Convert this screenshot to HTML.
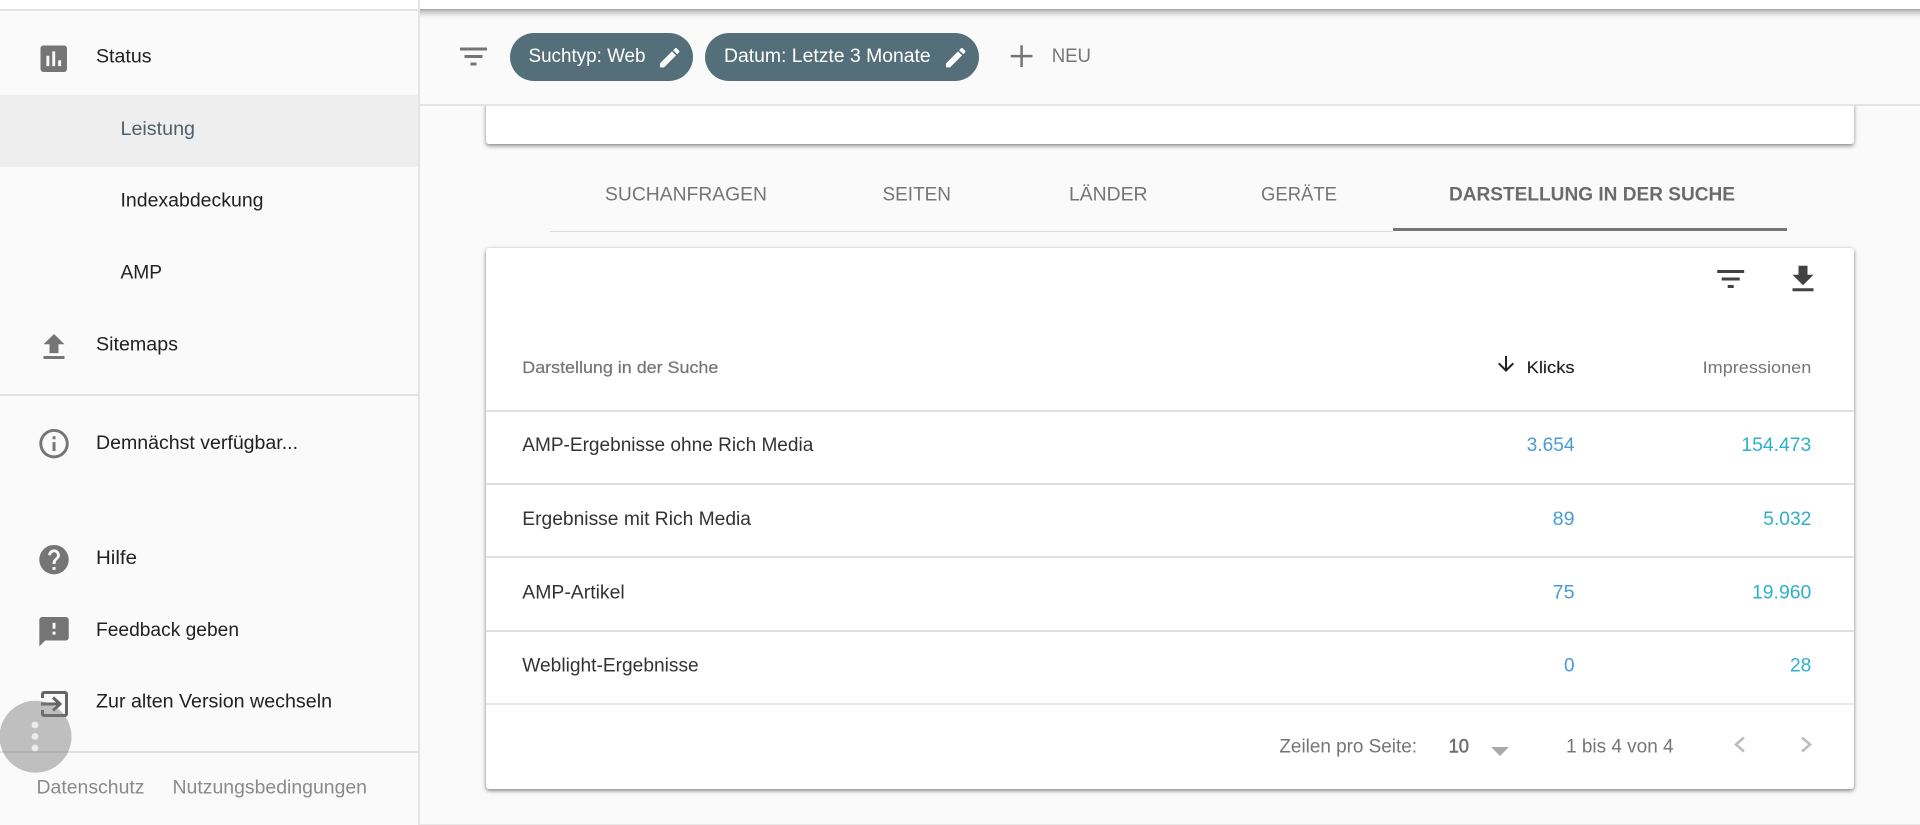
<!DOCTYPE html>
<html lang="de"><head><meta charset="utf-8"><title>Leistung</title>
<style>
html,body{margin:0;padding:0;width:1920px;height:825px;overflow:hidden;background:#fafafa}
div{position:absolute;box-sizing:border-box}
svg{position:absolute;left:0;top:0}
text{font-family:"Liberation Sans",sans-serif;font-size:19px;fill:#212121}
.g{fill:#757575}
.b{fill:#4a9ad6}
.c{fill:#2cb0cb}
.w{fill:#fff}
.s{font-size:18px}
</style></head><body>
<div style="left:420px;top:0;width:1500px;height:9px;background:#fff"></div>
<div style="left:0;top:0;width:418px;height:9px;background:#fff"></div>
<div style="left:486px;top:100px;width:1368px;height:44px;background:#fff;border-radius:3px;box-shadow:0 2px 4px rgba(0,0,0,.45)"></div>
<div style="left:420px;top:9px;width:1500px;height:97px;background:#fafafa;border-bottom:2px solid #e4e4e4"></div>
<div style="left:420px;top:9px;width:1500px;height:10px;background:linear-gradient(#a2a2a2,#c8c8c8 25%,#efefef 70%,#fafafa)"></div>
<div style="left:486px;top:247.5px;width:1368px;height:541.5px;background:#fff;border-radius:3px;box-shadow:0 2px 4px rgba(0,0,0,.42),0 0 3px rgba(0,0,0,.12)"></div>
<div style="left:0;top:95px;width:418px;height:72px;background:#eee"></div>
<div style="left:0;top:8.5px;width:418px;height:2px;background:#e2e2e2"></div>
<div style="left:0;top:394px;width:418px;height:2px;background:#e2e2e2"></div>
<div style="left:0;top:751px;width:418px;height:2px;background:#e2e2e2"></div>
<div style="left:418px;top:0;width:2px;height:825px;background:#e4e4e4"></div>
<div style="left:420px;top:824px;width:1500px;height:1px;background:#e8e8e8"></div>
<div style="left:550px;top:231px;width:843px;height:1px;background:#dcdcdc"></div>
<div style="left:1393px;top:228px;width:394px;height:3px;background:#757575"></div>
<div style="left:486px;top:409.5px;width:1368px;height:2px;background:#e0e0e0"></div>
<div style="left:486px;top:483px;width:1368px;height:2px;background:#e0e0e0"></div>
<div style="left:486px;top:556px;width:1368px;height:2px;background:#e0e0e0"></div>
<div style="left:486px;top:629.5px;width:1368px;height:2px;background:#e0e0e0"></div>
<div style="left:486px;top:703px;width:1368px;height:2px;background:#eaeaea"></div>
<div style="left:510px;top:33px;width:183px;height:48px;border-radius:24px;background:#546e7a"></div>
<div style="left:705px;top:33px;width:274px;height:48px;border-radius:24px;background:#546e7a"></div>

<svg width="1920" height="825" viewBox="0 0 1920 825" xmlns="http://www.w3.org/2000/svg">
<!-- sidebar text -->
<text x="96" y="62.5" textLength="55.5" lengthAdjust="spacingAndGlyphs">Status</text>
<text x="120.5" y="135" textLength="74.5" lengthAdjust="spacingAndGlyphs" style="fill:#4f5f69">Leistung</text>
<text x="120.5" y="206.5" textLength="143" lengthAdjust="spacingAndGlyphs">Indexabdeckung</text>
<text x="120.5" y="278.5" textLength="41.5" lengthAdjust="spacingAndGlyphs">AMP</text>
<text x="96" y="350.5" textLength="82" lengthAdjust="spacingAndGlyphs">Sitemaps</text>
<text x="96" y="449" textLength="202" lengthAdjust="spacingAndGlyphs">Demnächst verfügbar...</text>
<text x="96" y="564" textLength="41" lengthAdjust="spacingAndGlyphs">Hilfe</text>
<text x="96" y="636" textLength="143" lengthAdjust="spacingAndGlyphs">Feedback geben</text>
<text x="96" y="707.5" textLength="236" lengthAdjust="spacingAndGlyphs">Zur alten Version wechseln</text>
<text x="36.5" y="793.5" textLength="108" lengthAdjust="spacingAndGlyphs" style="fill:#8a8a8a">Datenschutz</text>
<text x="172.5" y="793.5" textLength="194.5" lengthAdjust="spacingAndGlyphs" style="fill:#8a8a8a">Nutzungsbedingungen</text>

<!-- sidebar icons -->
<g fill="#757575">
<path transform="translate(36.1,41.1) scale(1.47)" d="M19 3H5c-1.1 0-2 .9-2 2v14c0 1.1.9 2 2 2h14c1.1 0 2-.9 2-2V5c0-1.1-.9-2-2-2zM9 17H7v-7h2v7zm4 0h-2V7h2v10zm4 0h-2v-4h2v4z"/>
<path transform="translate(36,329.6) scale(1.5,1.47)" d="M9 16h6v-6h4l-7-7-7 7h4zm-4 2h14v2H5z"/>
<path transform="translate(36.4,426) scale(1.47)" d="M11 7h2v2h-2zm0 4h2v6h-2zm1-9C6.48 2 2 6.48 2 12s4.48 10 10 10 10-4.48 10-10S17.52 2 12 2zm0 18c-4.41 0-8-3.59-8-8s3.59-8 8-8 8 3.59 8 8-3.59 8-8 8z"/>
<path transform="translate(36.4,542) scale(1.47)" d="M12 2C6.48 2 2 6.48 2 12s4.48 10 10 10 10-4.48 10-10S17.52 2 12 2zm1 17h-2v-2h2v2zm2.07-7.75l-.9.92C13.45 12.9 13 13.5 13 15h-2v-.5c0-1.1.45-2.1 1.17-2.83l1.24-1.26c.37-.36.59-.86.59-1.41 0-1.1-.9-2-2-2s-2 .9-2 2H8c0-2.21 1.79-4 4-4s4 1.79 4 4c0 .88-.36 1.68-.93 2.25z"/>
<path transform="translate(36.4,614) scale(1.47)" d="M20 2H4c-1.1 0-1.99.9-1.99 2L2 22l4-4h14c1.1 0 2-.9 2-2V4c0-1.1-.9-2-2-2zm-7 12h-2v-2h2v2zm0-4h-2V6h2v4z"/>
</g>
<g fill="none" stroke="#666" stroke-width="3">
<path d="M42.5 698V694a1.5 1.5 0 0 1 1.5-1.5H65a1.5 1.5 0 0 1 1.5 1.5V714a1.5 1.5 0 0 1-1.5 1.5H44a1.5 1.5 0 0 1-1.5-1.5V710"/>
<path d="M41 704H60"/>
<path d="M53 697.5L60 704L53 710.5"/>
</g>

<!-- top filter bar -->
<path fill="#757575" transform="translate(455.5,38.5) scale(1.5)" d="M10 18h4v-2h-4v2zM3 6v2h18V6H3zm3 7h12v-2H6v2z"/>
<text class="w" x="528.5" y="62" textLength="117" lengthAdjust="spacingAndGlyphs">Suchtyp: Web</text>
<path fill="#fff" transform="translate(656.8,44.7) scale(1.08)" d="M3 17.25V21h3.75L17.81 9.94l-3.75-3.75L3 17.25zM20.71 7.04c.39-.39.39-1.02 0-1.41l-2.34-2.34c-.39-.39-1.02-.39-1.41 0l-1.83 1.83 3.75 3.75 1.83-1.83z"/>
<text class="w" x="724" y="62" textLength="206.7" lengthAdjust="spacingAndGlyphs">Datum: Letzte 3 Monate</text>
<path fill="#fff" transform="translate(942.8,44.7) scale(1.08)" d="M3 17.25V21h3.75L17.81 9.94l-3.75-3.75L3 17.25zM20.71 7.04c.39-.39.39-1.02 0-1.41l-2.34-2.34c-.39-.39-1.02-.39-1.41 0l-1.83 1.83 3.75 3.75 1.83-1.83z"/>
<path fill="#757575" transform="translate(1003,37.5) scale(1.55)" d="M19 12.8h-6.2V19h-1.6v-6.2H5v-1.6h6.2V5h1.6v6.2H19z"/>
<text class="g" x="1051.7" y="62" textLength="39.3" lengthAdjust="spacingAndGlyphs">NEU</text>

<!-- tabs -->
<text class="g" x="605" y="200.7" textLength="162" lengthAdjust="spacingAndGlyphs">SUCHANFRAGEN</text>
<text class="g" x="882.5" y="200.7" textLength="68.5" lengthAdjust="spacingAndGlyphs">SEITEN</text>
<text class="g" x="1069" y="200.7" textLength="78.5" lengthAdjust="spacingAndGlyphs">LÄNDER</text>
<text class="g" x="1261" y="200.7" textLength="76" lengthAdjust="spacingAndGlyphs">GERÄTE</text>
<text x="1449" y="200.7" textLength="286" lengthAdjust="spacingAndGlyphs" font-weight="700" style="fill:#6b6b6b">DARSTELLUNG IN DER SUCHE</text>

<!-- table tools -->
<path fill="#424242" transform="translate(1712.7,261) scale(1.5)" d="M10 18h4v-2h-4v2zM3 6v2h18V6H3zm3 7h12v-2H6v2z"/>
<path fill="#424242" transform="translate(1785,261.3) scale(1.5)" d="M19 9h-4V3H9v6H5l7 7 7-7zM5 18v2h14v-2H5z"/>

<!-- table head -->
<text class="g" x="522.3" y="372.8" textLength="196" lengthAdjust="spacingAndGlyphs" style="font-size:16.5px;stroke:#757575;stroke-width:.2">Darstellung in der Suche</text>
<path fill="#212121" transform="translate(1494,352)" d="M20 12l-1.41-1.41L13 16.17V4h-2v12.17l-5.58-5.59L4 12l8 8 8-8z"/>
<text x="1526.6" y="373" textLength="48" lengthAdjust="spacingAndGlyphs" style="font-size:16.5px;stroke:#212121;stroke-width:.15">Klicks</text>
<text class="g" x="1702.6" y="373" textLength="108.7" lengthAdjust="spacingAndGlyphs" style="font-size:16.5px">Impressionen</text>

<!-- rows -->
<text x="522.3" y="451" textLength="291" lengthAdjust="spacingAndGlyphs" style="fill:#333">AMP-Ergebnisse ohne Rich Media</text>
<text x="522.3" y="525" textLength="228.7" lengthAdjust="spacingAndGlyphs" style="fill:#333">Ergebnisse mit Rich Media</text>
<text x="522.3" y="598.3" textLength="102.4" lengthAdjust="spacingAndGlyphs" style="fill:#333">AMP-Artikel</text>
<text x="522.3" y="671.7" textLength="176.4" lengthAdjust="spacingAndGlyphs" style="fill:#333">Weblight-Ergebnisse</text>

<text class="b" x="1526.6" y="451" textLength="48" lengthAdjust="spacingAndGlyphs">3.654</text>
<text class="b" x="1552.7" y="525" textLength="21.9" lengthAdjust="spacingAndGlyphs">89</text>
<text class="b" x="1552.7" y="598.3" textLength="21.9" lengthAdjust="spacingAndGlyphs">75</text>
<text class="b" x="1564" y="671.7" textLength="10.6" lengthAdjust="spacingAndGlyphs">0</text>
<text class="c" x="1741.4" y="451" textLength="69.9" lengthAdjust="spacingAndGlyphs">154.473</text>
<text class="c" x="1763.3" y="525" textLength="48" lengthAdjust="spacingAndGlyphs">5.032</text>
<text class="c" x="1752" y="598.3" textLength="59.3" lengthAdjust="spacingAndGlyphs">19.960</text>
<text class="c" x="1790" y="671.7" textLength="21.3" lengthAdjust="spacingAndGlyphs">28</text>

<!-- pagination -->
<text class="g" x="1279.4" y="752.3" textLength="137.6" lengthAdjust="spacingAndGlyphs">Zeilen pro Seite:</text>
<text x="1448.6" y="752.3" textLength="20.4" lengthAdjust="spacingAndGlyphs" style="fill:#6e6e6e;stroke:#6e6e6e;stroke-width:.5">10</text>
<path fill="#aaa" d="M1491 747h18l-9 9z"/>
<text class="g" x="1566" y="752.3" textLength="107.6" lengthAdjust="spacingAndGlyphs">1 bis 4 von 4</text>
<path fill="none" stroke="#bdbdbd" stroke-width="2.6" d="M1744 737.5L1736 744.5L1744 751.5"/>
<path fill="none" stroke="#bdbdbd" stroke-width="2.6" d="M1802 737.5L1810 744.5L1802 751.5"/>

<!-- floating button -->
<circle cx="35.5" cy="736.7" r="36" fill="rgba(120,120,120,.45)"/>
<circle cx="35" cy="725" r="3.4" fill="#ececec"/>
<circle cx="35" cy="736.5" r="3.4" fill="#ececec"/>
<circle cx="35" cy="748" r="3.4" fill="#ececec"/>
</svg>
</body></html>
